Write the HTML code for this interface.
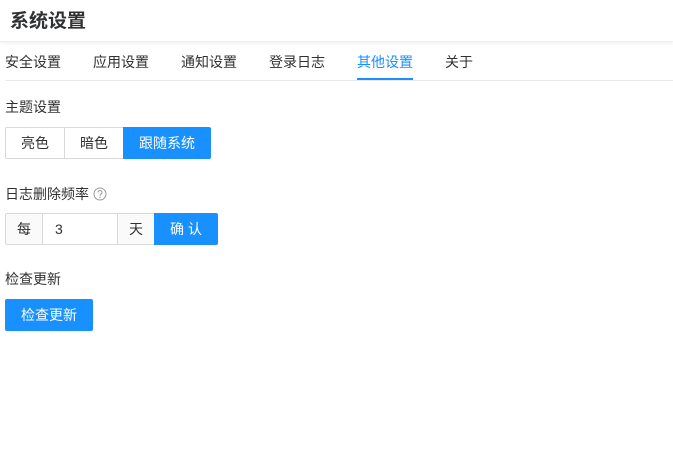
<!DOCTYPE html>
<html><head><meta charset="utf-8"><style>
*{box-sizing:border-box;margin:0;padding:0}
body{width:673px;height:461px;background:#fff;font-family:"Liberation Sans","Noto Sans CJK SC",sans-serif;color:#303133;position:relative;overflow:hidden;font-size:14px}
.hd{position:absolute;left:0;top:0;width:673px;height:42px;box-shadow:0 1px 4px rgba(0,0,0,.08);border-bottom:1px solid #f0f0f0}
.hd span{position:absolute;left:10px;top:6px;font-size:19px;font-weight:bold;color:#303133}
.tabs{position:absolute;left:5px;top:0;width:668px;height:81px;border-bottom:1px solid #e8e8e8}
.tab{position:absolute;top:53px;font-size:14px;color:#303133;line-height:18px}
.act{color:#1890ff}
.ul{position:absolute;left:357px;top:78px;width:56px;height:2px;background:#1890ff}
.lbl{position:absolute;left:5px;font-size:14px;line-height:18px}
.b{position:absolute;height:32px;line-height:30px;text-align:center;font-size:14px;border:1px solid #d9d9d9;background:#fff}
.blue{background:#1890ff;border-color:#1890ff;color:#fff}
.gr{background:#fafafa}
</style></head><body>
<div class="hd"><span>系统设置</span></div>
<div class="tabs"></div>
<div class="tab" style="left:5px">安全设置</div>
<div class="tab" style="left:93px">应用设置</div>
<div class="tab" style="left:181px">通知设置</div>
<div class="tab" style="left:269px">登录日志</div>
<div class="tab act" style="left:357px">其他设置</div>
<div class="tab" style="left:445px">关于</div>
<div class="ul"></div>
<div class="lbl" style="top:98px">主题设置</div>
<div class="b" style="left:5px;top:127px;width:60px;border-radius:2px 0 0 2px">亮色</div>
<div class="b" style="left:64px;top:127px;width:60px">暗色</div>
<div class="b blue" style="left:123px;top:127px;width:88px;border-radius:0 2px 2px 0">跟随系统</div>
<div class="lbl" style="top:185px">日志删除频率 <svg width="14" height="14" viewBox="0 0 14 14" style="vertical-align:-2px"><circle cx="7" cy="7" r="6" fill="none" stroke="#999" stroke-width="1"/><path d="M5 5.5a2 2 0 1 1 2.8 1.8C7.2 7.6 7 8 7 8.8" fill="none" stroke="#999" stroke-width="1"/><circle cx="7" cy="10.5" r=".7" fill="#999"/></svg></div>
<div class="b gr" style="left:5px;top:213px;width:38px;border-radius:2px 0 0 2px">每</div>
<div class="b" style="left:42px;top:213px;width:76px;text-align:left;padding-left:12px">3</div>
<div class="b gr" style="left:117px;top:213px;width:38px">天</div>
<div class="b blue" style="left:154px;top:213px;width:64px;border-radius:0 2px 2px 0">确 认</div>
<div class="lbl" style="top:270px">检查更新</div>
<div class="b blue" style="left:5px;top:299px;width:88px;border-radius:2px">检查更新</div>
</body></html>
